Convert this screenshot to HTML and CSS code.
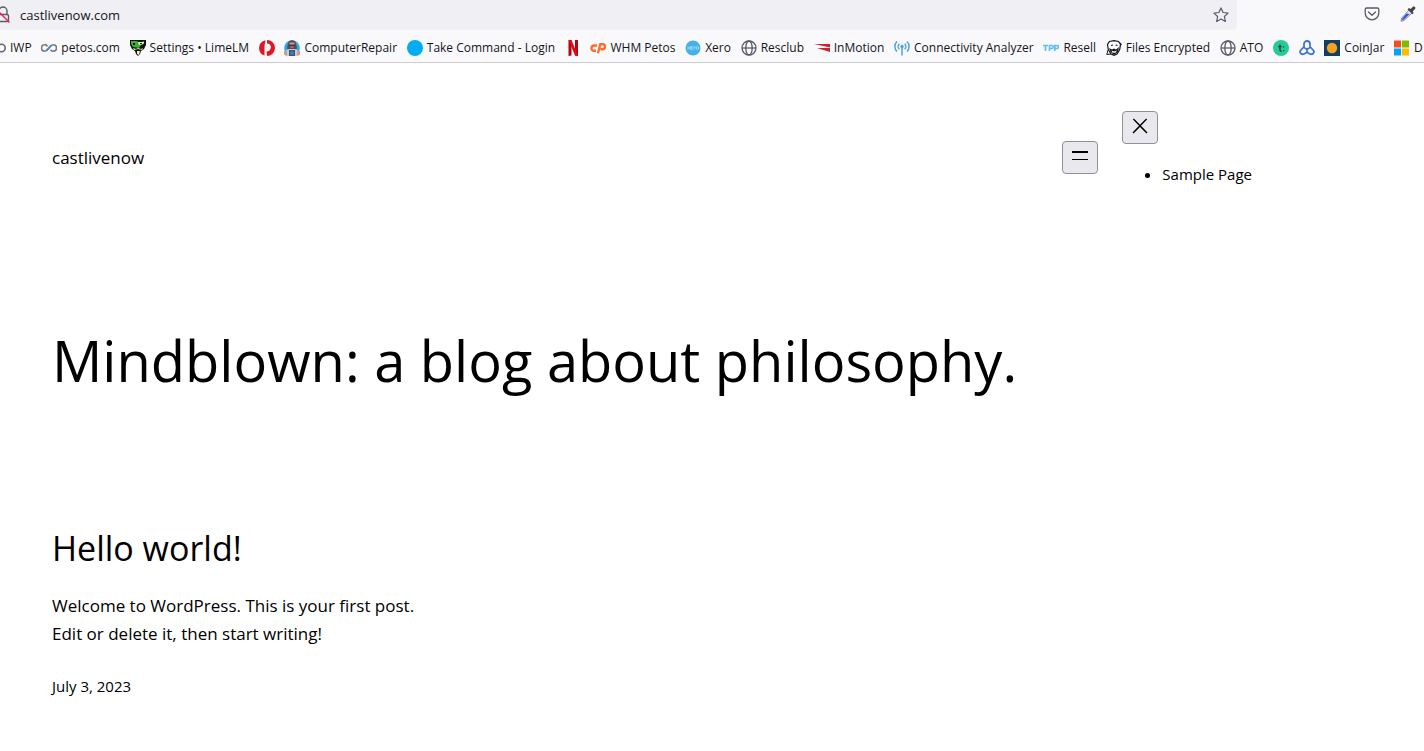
FILE: index.html
```html
<!DOCTYPE html>
<html lang="en">
  <head>
    <meta charset="UTF-8" />
    <meta name="viewport" content="width=device-width, initial-scale=1.0" />
    <title>castlivenow</title>
    <link rel="stylesheet" href="styles.css">
  </head>
  <body>
    <div class="browser">
      <div class="toolbar">
        <form class="urlbar">
          <svg class="lock" width="12" height="18" viewBox="0 0 12 18" fill="none" stroke="#5b5b66" stroke-width="1.4">
            <path d="M-1 8V5a4 4 0 0 1 8 0v3M-3 8.500h10a1.500 1.500 0 0 1 1.500 1.500v4a1.500 1.500 0 0 1-1.500 1.500H-3" />
            <path d="M-6 1 9.500 16.500" stroke="#e22850" />
          </svg>
          <input class="url" type="text" value="castlivenow.com" aria-label="Address" />
          <button class="tool" type="button" aria-label="Bookmark this page">
            <svg width="16" height="16" viewBox="0 0 16 16" fill="none" stroke="#5b5b66" stroke-width="1.2" stroke-linejoin="round"><path d="m8 .9 2.100 4.600 5 .6-3.700 3.400 1 5L8 12l-4.400 2.500 1-5L.9 6.100l5-.6z" /></svg>
          </button>
        </form>
        <div class="tools">
          <button class="tool" type="button" aria-label="Save to Pocket">
            <svg width="16" height="16" viewBox="0 0 16 16" fill="none" stroke="#5b5b66" stroke-width="1.3" stroke-linecap="round"><path d="M2.700 2h10.600a1.500 1.500 0 0 1 1.500 1.500V7A6.800 6.800 0 0 1 1.200 7V3.500A1.500 1.500 0 0 1 2.700 2z" /><path d="M4.500 6 8 9.300 11.500 6" stroke-linejoin="round" /></svg>
          </button>
          <button class="tool" type="button" aria-label="Colour picker">
            <svg width="16" height="16" viewBox="0 0 16 16"><path d="m9 4 3 3-8 7.500-3 .8.700-3.300z" fill="#dce4f5" stroke="#777" stroke-width=".8" /><path d="m6.500 7.500 3 .5L4 13.500l-2 .7.500-2z" fill="#3558d8" /><path d="M7.500 3.200 9 2l1.500 1L13 .7c1.500-1 3.200.8 2 2.300l-2.300 2.500 1 1.500-1.400 1.300z" fill="#444" /></svg>
          </button>
        </div>
      </div>
      <nav class="bookmarks" aria-label="Bookmarks">
        <a href="#"><svg viewBox="0 0 16 16" fill="none" stroke="#66666e" stroke-width="1.600"><circle cx="11.500" cy="8" r="3.700" /></svg>IWP</a>
        <a href="#"><svg viewBox="0 0 16 16" fill="none" stroke="#77777c" stroke-width="1.600"><path d="M6.500 6.500C5.500 5 4.500 4.500 3.700 4.700a3.200 3.200 0 0 0 0 6.500c1.800 0 2.800-1.500 4.300-3.200 1.500-1.800 2.500-3.200 4.300-3.200a3.200 3.200 0 0 1 0 6.500c-1.200 0-2-.7-2.800-1.600" /><path d="M5.500 10.500 10 5.600" stroke="#3b85d4" /></svg>petos.com</a>
        <a href="#"><svg viewBox="0 0 16 16"><path d="M0 0h16v5l-2 4-3 2-1 3-2 2-2-2-1-3-3-2-2-4z" fill="#111" /><path d="M1 1h6l2 2 5-2v3l-3 1-2 3-6-1-2-3z" fill="#35b42b" /><path d="M8 2h6l-1 2-4 1zM3 8l3 1 2-1 3 1 2-1-1 2H4zM7 11h3l-1 4-2-1z" fill="#efedc1" /><path d="M3 3h2v2H3zM10 3h2v1h-2zM4 10l4-1 4 1-4 1z" fill="#111" /></svg>Settings • LimeLM</a>
        <a href="#" aria-label="Post"><svg viewBox="0 0 16 16"><path d="M6.500.2a8 8 0 0 0-1 15.400V6.500C5.500 4 6.500 2 6.500.2z" fill="#dc1928" /><path d="M8 0a8 8 0 0 1 0 16l-.5-4.500c5.500 0 6-8 .5-8z" fill="#dc1928" /></svg></a>
        <a href="#"><svg viewBox="0 0 16 16"><circle cx="8" cy="8" r="7.800" fill="#28a9e8" /><path d="M4 4c0-5 8-5 8 0l1 4-2 3H5L3 8z" fill="#604554" /><path d="M5.500 2.500h5V5h-5z" fill="#d89a82" /><path d="M5 4.500h6V6H5z" fill="#333a50" /><path d="M6.500 6.500h3v1h-3z" fill="#d89a82" /><path d="M1 13c0-3 3-4 5-4h4c2 0 5 1 5 4v3H1z" fill="#c8cbd8" /><path d="M5 10h6v6H5z" fill="#45526f" /><circle cx="8" cy="13" r="2" fill="#2688bd" /><path d="M0 11h3v4H0zM13 11h3v4h-3z" fill="#d99787" /></svg>ComputerRepair</a>
        <a href="#"><svg viewBox="0 0 16 16"><circle cx="8" cy="8" r="8" fill="#00adef" /></svg>Take Command - Login</a>
        <a href="#" aria-label="Netflix"><svg viewBox="0 0 16 16"><path d="M3.500 0h3v15.600l-3 .4zM10 0h3v16l-3-.4z" fill="#b20710" /><path d="M3.500 0h3L13 16l-3-.4z" fill="#e50914" /></svg></a>
        <a href="#"><svg viewBox="0 0 16 16" fill="none" stroke="#ff6c2c" stroke-width="2.400"><path d="M7 5.500H4.500c-4 0-4 5.300-.5 5.300H6M8 13.300l2.300-9h2.500c3.300 0 2.500 5-.3 5h-2" /></svg>WHM Petos</a>
        <a href="#"><svg viewBox="0 0 16 16"><circle cx="8" cy="8" r="7.500" fill="#45b1e5" /><path d="m2.500 6.500 2 3m0-3-2 3M7.700 6.700H5.600v2.600h2.100M5.600 8h2M9 9.500V7l1.500-.3" fill="none" stroke="#b9e4f7" stroke-width=".8" /><circle cx="12.300" cy="8" r="1.300" fill="none" stroke="#b9e4f7" stroke-width=".8" /></svg>Xero</a>
        <a href="#"><svg viewBox="0 0 16 16" fill="none" stroke="#5b5b66" stroke-width="1.300"><circle cx="8" cy="8" r="7" /><ellipse cx="8" cy="8" rx="3.200" ry="7" /><path d="M1 8h14" /></svg>Resclub</a>
        <a href="#"><svg viewBox="0 0 16 16"><path d="M0 4h16v3.500z" fill="#c9252d" /><path d="M3 8h13v4z" fill="#c9252d" /></svg>InMotion</a>
        <a href="#"><svg viewBox="0 0 16 16" fill="none" stroke="#4ba3df" stroke-width="1.500"><path d="M3 1.500a7 7 0 0 0 0 10M13 1.500a7 7 0 0 1 0 10M5.300 3.700a4 4 0 0 0 0 5.600M10.700 3.700a4 4 0 0 1 0 5.600M8 7v8.500" /><circle cx="8" cy="6.500" r="1" fill="#4ba3df" /></svg>Connectivity Analyzer</a>
        <a href="#"><svg viewBox="0 0 16 16" fill="none" stroke="#62bdf2" stroke-width="1.700"><path d="M0 5.500h5M2.500 5.500V11M6.500 11V5.500H9c1.500 0 1.500 3 0 3H7M11.800 11V5.500h2.400c1.500 0 1.500 3 0 3h-2" /></svg>Resell</a>
        <a href="#"><svg viewBox="0 0 16 16"><path d="M3.500 1.500 8 .7l4.500.8 2 3-.8 5L11 14l-3 1.300L5 14 2.300 9.500l-.8-5z" fill="#fff" stroke="#18181b" stroke-width="1.200" /><path d="m3 8 3 1.500 2-1L10 9.500 13 7l-1 5-4 3-3.500-3z" fill="#18181b" /><path d="m5.500 10.500 2.500 1 3-1-1.500 2.200h-3z" fill="#fff" /><path d="M5 5.500 7 5M9.500 5l2 .5" fill="none" stroke="#18181b" stroke-width="1.200" /><path d="M2 10 .8 14.500 5 14M13.500 2.500 15.500 4l-1.500 2" fill="none" stroke="#18181b" /></svg>Files Encrypted</a>
        <a href="#"><svg viewBox="0 0 16 16" fill="none" stroke="#5b5b66" stroke-width="1.300"><circle cx="8" cy="8" r="7" /><ellipse cx="8" cy="8" rx="3.200" ry="7" /><path d="M1 8h14" /></svg>ATO</a>
        <a href="#" aria-label="Tyro"><svg viewBox="0 0 16 16"><circle cx="8" cy="8" r="8" fill="#27c995" /><path d="M7 4.500v5.500q0 1.200 1.700 1M5.200 6.700h3.300" fill="none" stroke="#173f4b" stroke-width="1.300" /><path d="M10 6.300h1.200v1.200H10zM10 10h1.200v1.200H10z" fill="#173f4b" /></svg></a>
        <a href="#" aria-label="Knot"><svg viewBox="0 0 16 16" fill="none" stroke="#3f75ce" stroke-width="1.800" stroke-linejoin="round"><path d="M5 7.500V4a3 3 0 0 1 6 0v3.500L8 9.200z" /><path d="M4.700 7 1.500 10.500c-1.500 2 1 4.500 3.500 3.500l3-1.700 3 1.700c2.500 1 5-1.500 3.500-3.500L11.300 7M8 9v3.500" /></svg></a>
        <a href="#"><svg viewBox="0 0 16 16"><path d="M0 0h16v16H0z" fill="#103e66" /><circle cx="8" cy="8" r="5.200" fill="#f9a11b" /></svg>CoinJar</a>
        <a href="#"><svg viewBox="0 0 16 16"><path d="M0 .5h7v7H0z" fill="#f25022" /><path d="M8 .5h7v7H8z" fill="#7fba00" /><path d="M0 8.500h7v7H0z" fill="#00a4ef" /><path d="M8 8.500h7v7H8z" fill="#ffb900" /></svg>D</a>
      </nav>
    </div>

    <div class="site">
      <header class="site-header">
        <a class="site-title" href="#">castlivenow</a>
        <nav class="navigation" aria-label="Menu">
          <button class="menu-button" type="button" aria-label="Open menu">
            <svg width="24" height="24" viewBox="0 0 24 24"><path d="M4 7h16v2H4zM4 15h16v1H4z" /></svg>
          </button>
          <div class="menu">
            <button class="menu-button" type="button" aria-label="Close menu">
              <svg width="24" height="24" viewBox="0 0 24 24"><path d="m13 11.800 6.100-6.300-1-1-6.100 6.200-6.100-6.200-1 1 6.100 6.300-6.500 6.700 1 1 6.500-6.600 6.500 6.600 1-1z" /></svg>
            </button>
            <ul>
              <li><a href="#">Sample Page</a></li>
            </ul>
          </div>
        </nav>
      </header>
      <main>
        <h1>Mindblown: a blog about philosophy.</h1>
        <article class="post">
          <h2><a href="#">Hello world!</a></h2>
          <p>Welcome to WordPress. This is your first post.<br />Edit or delete it, then start writing!</p>
          <time datetime="2023-07-03">July 3, 2023</time>
        </article>
      </main>
    </div>
  </body>
</html>
```

FILE: styles.css
```css
* {
  box-sizing: border-box;
}
body {
  margin: 0;
  background: #fff;
  color: #000;
  font-family: "Open Sans", "Noto Sans", sans-serif;
  font-size: 17px;
  line-height: 28px;
  overflow-x: hidden;
}
a {
  color: inherit;
  text-decoration: none;
}
.browser {
  background: #f9f9fb;
  border-bottom: 1px solid #ccc;
  color: #15141a;
}
.toolbar {
  display: flex;
  height: 30px;
}
.urlbar {
  display: flex;
  flex: 1;
  align-items: center;
  gap: 8px;
  padding-right: 8px;
  background: #f0f0f4;
  border-radius: 0 0 4px 0;
}
.url {
  flex: 1;
  padding: 0;
  border: 0;
  outline: 0;
  background: none;
  color: #15141a;
  font-family: inherit;
  font-size: 13px;
}
.tools {
  display: flex;
  align-items: center;
  justify-content: flex-end;
  gap: 20px;
  width: 187px;
  padding: 0 8px 2px 0;
}
.tool {
  display: flex;
  padding: 0;
  border: 0;
  background: none;
}
.bookmarks {
  display: flex;
  justify-content: space-between;
  height: 32px;
  margin-left: -10px;
  padding: 4px 1px 0 0;
  overflow: hidden;
  font-size: 12px;
}
.bookmarks a {
  display: flex;
  flex: none;
  align-items: center;
  gap: 4px;
  white-space: nowrap;
}
.bookmarks svg {
  width: 16px;
  height: 16px;
}
.site {
  max-width: 1304px;
  padding: 48px 52px;
}
.site-header {
  display: flex;
  justify-content: space-between;
  align-items: center;
}
.navigation {
  display: flex;
  align-items: center;
  gap: 24px;
}
.menu-button {
  display: block;
  width: 36px;
  height: 33px;
  padding: 2px 5px 5px;
  border: 1px solid #8f8f9d;
  border-radius: 4px;
  background: #e9e9ed;
}
.menu-button svg {
  display: block;
}
.menu ul {
  margin: 16px 0;
  padding-left: 40px;
  font-size: 15px;
}
h1 {
  margin: 116px 0 124px;
  font-size: 56px;
  font-weight: 400;
  line-height: 80px;
}
h2 {
  margin: 0 0 20px;
  font-size: 34px;
  font-weight: 400;
  line-height: 48px;
}
.post p {
  margin: 0 0 24px;
}
.post time {
  font-size: 15px;
}
```
